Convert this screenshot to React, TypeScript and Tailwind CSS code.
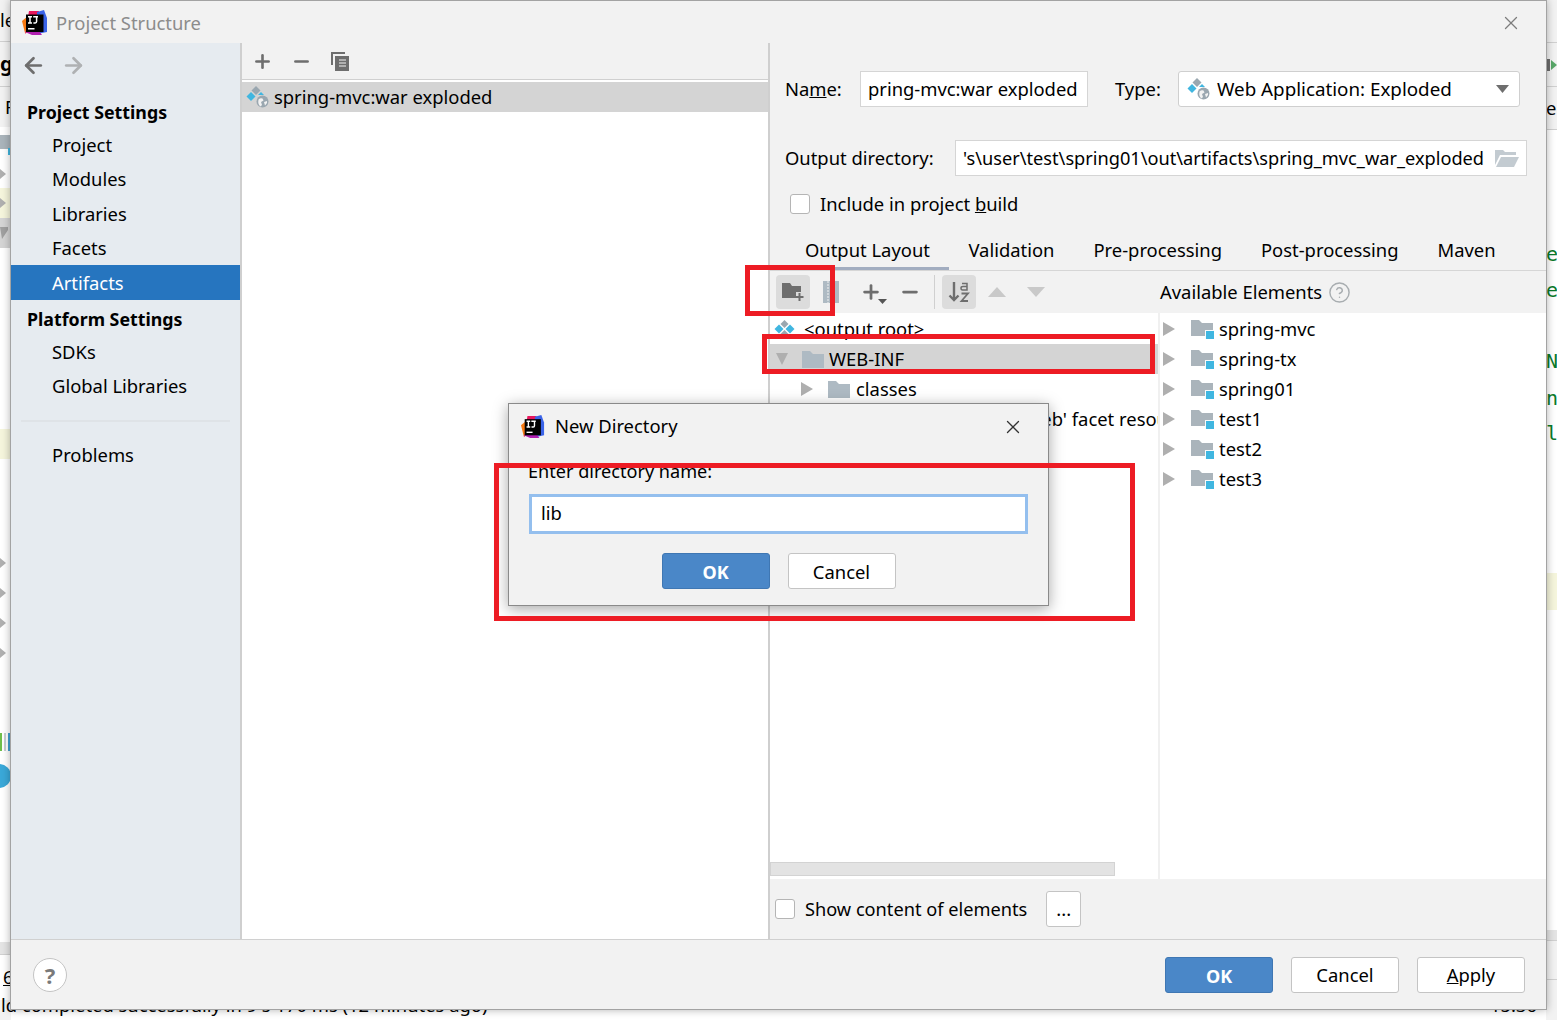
import { ReactNode } from "react";
import { ArrowLeft, ArrowRight, HelpCircle, Minus, Plus, X } from "lucide-react";

const ijLogo = (size: number) => (
  <svg width={size} height={size} viewBox="0 0 26 26">
    <path d="M7 1 L17 1 L14 14 L3 24 Z" fill="#e8175d" />
    <path d="M0 11 L6 6 L8 20 L3 23 Z" fill="#f97a12" />
    <path d="M15 2 L22 0 L25 8 L25 22 L15 24 Z" fill="#3a63e8" />
    <path d="M3 22 L10 25 L20 25 L12 14 Z" fill="#b01fb0" />
    <rect x="4" y="4.5" width="17.5" height="17.5" fill="#000" />
    <rect x="6" y="18" width="6.5" height="1.5" fill="#fff" />
    <path d="M6 6.8h4M8 6.8v6.2M6 13h4M11.2 6.8h4.8M14.6 6.8v4.8q0 1.4-1.4 1.4h-1.8" stroke="#fff" strokeWidth="1.5" fill="none" />
  </svg>
);

const ArtifactIcon = () => (
  <svg width="24" height="24" viewBox="0 0 24 24" className="shrink-0">
    <path d="M10 1 L14.5 5.5 L10 10 L5.5 5.5 Z" fill="#9aa7b0" />
    <path d="M5 7 L9.5 11.5 L5 16 L0.5 11.5 Z" fill="#40b6e0" />
    <path d="M15 7 L18 10 L12 10 Z" fill="#40b6e0" />
    <circle cx="16.5" cy="16.5" r="6" fill="#9aa7b0" />
    <path d="M12.5 14.5 q2-2 4-1 l1 2-2.5 1.5 1 3-1.5 1.5 q-3-2-2-7 Z M18 17l3-1 0 2-2 2.5Z" fill="#f2f2f2" />
  </svg>
);

const RootIcon = () => (
  <svg width="22" height="20" viewBox="0 0 22 20" className="shrink-0">
    <path d="M10.5 1 L14.5 5 L10.5 9 L6.5 5 Z" fill="#9aa7b0" />
    <path d="M5 5.5 L9.5 10 L5 14.5 L0.5 10 Z" fill="#40b6e0" />
    <path d="M16 5.5 L20.5 10 L16 14.5 L11.5 10 Z" fill="#40b6e0" />
    <path d="M10.5 11 L14.5 15 L10.5 19 L6.5 15 Z" fill="#9aa7b0" />
  </svg>
);

const FolderIcon = () => (
  <svg width="22" height="18" viewBox="0 0 22 18" className="shrink-0">
    <path d="M0 1 H8 L11 4 H22 V18 H0 Z" fill="#aebac3" />
  </svg>
);

const ModuleFolder = () => (
  <svg width="23" height="19" viewBox="0 0 23 19" className="shrink-0">
    <path d="M0 0 H8 L11 3 H22 V16 H0 Z" fill="#aab4bb" />
    <rect x="14" y="10" width="9" height="9" fill="#f8fafb" />
    <rect x="15" y="11" width="8" height="8" fill="#40b6e0" />
  </svg>
);

const Arrow = ({ open = false }: { open?: boolean }) => (
  <svg width="12" height="14" viewBox="0 0 12 14" className="shrink-0">
    {open ? <path d="M0 1 H12 L6 13 Z" fill="#afafaf" /> : <path d="M0 0 L12 7 L0 14 Z" fill="#afafaf" />}
  </svg>
);

const Checkbox = () => <div className="w-[20px] h-[20px] rounded-[3px] bg-white border border-[#b5b5b5] shrink-0" />;

const Btn = ({ children, primary = false }: { children: ReactNode; primary?: boolean }) => (
  <button
    type="button"
    className={`w-[108px] h-[36px] pt-[2px] rounded-[3px] border flex items-center justify-center ${
      primary ? "bg-[#4a87c8] border-[#3f77b3] text-white font-bold text-[18px]" : "bg-white border-[#c4c4c4] text-black"
    }`}
  >
    {children}
  </button>
);

const NavItem = ({ label, h = 34, active = false }: { label: string; h?: number; active?: boolean }) => (
  <div
    className={`pl-[41px] flex items-center ${active ? "bg-[#2675bf] text-white pt-[1px]" : "text-black"}`}
    style={{ height: h }}
  >
    {label}
  </div>
);

const NavHead = ({ label, h = 36 }: { label: string; h?: number }) => (
  <div className="pl-[16px] pt-[2px] flex items-center font-bold text-[17.8px]" style={{ height: h }}>
    {label}
  </div>
);

const modules = ["spring-mvc", "spring-tx", "spring01", "test1", "test2", "test3"];
const tabs = ["Output Layout", "Validation", "Pre-processing", "Post-processing", "Maven"];

const Green = ({ c }: { c: string }) => (
  <span className="text-[#0b7a2a] text-[20px] font-['DejaVu_Sans_Mono']">{c}</span>
);
const Sliver = ({ h, bg = "", children }: { h: number; bg?: string; children?: ReactNode }) => (
  <div className={`flex items-center overflow-hidden whitespace-nowrap ${bg}`} style={{ height: h }}>
    {children}
  </div>
);

export default function App() {
  return (
    <div
      className="relative w-[1557px] h-[1020px] overflow-hidden text-[18.4px] text-black leading-none bg-white"
      style={{ fontFamily: '"Noto Sans", "Liberation Sans", sans-serif' }}
    >
      {/* IDE behind the dialog */}
      <div className="flex justify-between">
        <div className="w-[11px] flex flex-col">
          <Sliver h={42} bg="bg-[#f2f2f2] border-b border-[#d0d0d0]">le</Sliver>
          <Sliver h={45} bg="bg-[#f2f2f2] border-b border-[#d0d0d0]"><b className="text-[20px]">g(</b></Sliver>
          <Sliver h={40} bg="bg-[#f2f2f2]"><span className="ml-[5px]">F</span></Sliver>
          <Sliver h={33}>
            <svg width="11" height="22" viewBox="0 0 11 22">
              <path d="M0 2 H11 V16 H0 Z" fill="#aab4bb" />
              <rect x="8" y="15" width="3" height="7" fill="#40b6e0" />
            </svg>
          </Sliver>
          <Sliver h={28}><svg width="6" height="10"><path d="M0 0 L6 5 L0 10 Z" fill="#afafaf" /></svg></Sliver>
          <Sliver h={30} bg="bg-[#f5f5dc]"><svg width="6" height="10"><path d="M0 0 L6 5 L0 10 Z" fill="#afafaf" /></svg></Sliver>
          <Sliver h={30} bg="bg-[#d4d4d4]"><svg width="8" height="12"><path d="M0 0 H8 V3 L2 12 Z" fill="#a0a0a0" /></svg></Sliver>
          <Sliver h={181} />
          <Sliver h={30} bg="bg-[#f5f5dc]" />
          <Sliver h={89} />
          {[0, 1, 2, 3].map((i) => (
            <Sliver key={i} h={30}><svg width="6" height="10"><path d="M0 0 L6 5 L0 10 Z" fill="#afafaf" /></svg></Sliver>
          ))}
          <Sliver h={64} />
          <Sliver h={20}>
            <div className="flex gap-[2px] h-[18px]">
              <div className="w-[2px] bg-[#6fbf4a]" />
              <div className="w-[2px] bg-[#c8ced2]" />
              <div className="w-[3px] bg-[#40a0d0]" />
            </div>
          </Sliver>
          <Sliver h={10} />
          <Sliver h={28}>
            <div className="w-[24px] h-[24px] -ml-[13px] rounded-full bg-[#3aa8d8] shrink-0" />
          </Sliver>
          <Sliver h={152} />
          <Sliver h={13} bg="bg-[#e4e4e4] border-b border-[#d0d0d0]" />
          <Sliver h={45}><span className="ml-[3px] underline">6</span></Sliver>
          <Sliver h={20} bg="bg-[#f2f2f2]" />
        </div>
        <div className="w-[11px] flex flex-col">
          <Sliver h={43} bg="bg-[#f2f2f2] border-b border-[#d0d0d0]" />
          <Sliver h={44} bg="bg-[#f2f2f2] border-b border-[#d0d0d0]">
            <svg width="11" height="14" viewBox="0 0 11 14">
              <path d="M0 1 H4 V13 H0 Z" fill="#6e6e6e" />
              <path d="M5 2 L11 7 L5 12 Z" fill="#59a869" />
            </svg>
          </Sliver>
          <Sliver h={43} bg="bg-[#f2f2f2] border-b border-[#d0d0d0]"><span>eb</span></Sliver>
          <Sliver h={106} />
          <Sliver h={36}><Green c="e" /></Sliver>
          <Sliver h={36}><Green c="e" /></Sliver>
          <Sliver h={35} />
          <Sliver h={36}><Green c="N" /></Sliver>
          <Sliver h={37}><Green c="n" /></Sliver>
          <Sliver h={34}><Green c="l" /></Sliver>
          <Sliver h={123} />
          <Sliver h={37} bg="bg-[#f5f5dc]" />
          <Sliver h={320} />
          <Sliver h={11} bg="bg-[#e4e4e4] border-b border-[#d0d0d0]" />
          <Sliver h={39} bg="bg-[#f2f2f2] border-b border-[#d0d0d0]" />
          <Sliver h={40} bg="bg-[#f2f2f2]" />
        </div>
      </div>
      <div className="absolute left-0 right-0 top-[993px] whitespace-nowrap flex justify-between pr-[20px]">
        <span className="pl-[1px] pt-[3px]">ld completed successfully in 9 s 170 ms (12 minutes ago)</span>
        <span className="pt-[3px]">15:36</span>
      </div>

      {/* Project Structure window */}
      <div className="absolute left-[10px] top-0 w-[1537px] h-[1010px] bg-[#f2f2f2] border border-[#a3a3a3] flex flex-col shadow-[0_0_8px_rgba(0,0,0,0.3)]">
        <div className="h-[42px] flex items-center shrink-0 pl-[11px] pr-[24px] pt-[2px]">
          {ijLogo(26)}
          <span className="ml-[8px] text-[#8c8c8c]">Project Structure</span>
          <X className="ml-auto text-[#7d7d7d]" size={22} strokeWidth={1.4} />
        </div>

        <div className="flex flex-1 min-h-0">
          <aside className="w-[229px] shrink-0 bg-[#e6ebf0] flex flex-col">
            <div className="h-[44px] flex items-center pl-[10px] gap-[15px] shrink-0">
              <ArrowLeft className="text-[#6e6e6e]" size={25} strokeWidth={2.6} />
              <ArrowRight className="text-[#afb1b3]" size={25} strokeWidth={2.6} />
            </div>
            <div className="pt-[7px]">
              <NavHead label="Project Settings" />
              <NavItem label="Project" h={31} />
              <NavItem label="Modules" h={36} />
              <NavItem label="Libraries" />
              <NavItem label="Facets" />
              <NavItem label="Artifacts" h={35} active />
              <NavHead label="Platform Settings" h={38} />
              <NavItem label="SDKs" h={29} />
              <NavItem label="Global Libraries" h={38} />
              <div className="h-[2px] mt-[15px] mb-[16px] mx-[10px] bg-[#dfe3e7]" />
              <NavItem label="Problems" />
            </div>
          </aside>

          <section className="w-[528px] shrink-0 flex flex-col bg-white border-l-2 border-[#cfcfcf]">
            <div className="h-[36px] bg-[#f2f2f2] flex items-center pl-[10px] gap-[18px] shrink-0">
              <Plus className="text-[#6e6e6e]" size={21} strokeWidth={3} />
              <Minus className="text-[#6e6e6e]" size={21} strokeWidth={3} />
              <svg width="20" height="20" viewBox="0 0 20 20">
                <path d="M1 1 H15 V3 H3 V14 H1 Z" fill="#6e6e6e" />
                <path d="M5 5 H19 V20 H5 Z" fill="#6e6e6e" />
                <path d="M9 9 H16 M9 12 H16 M9 15 H16" stroke="#f2f2f2" strokeWidth="1.2" />
              </svg>
            </div>
            <div className="h-[3px] bg-white border-t border-[#d0d0d0] shrink-0" />
            <div className="h-[30px] bg-[#d4d4d4] flex items-center pl-[4px] gap-[4px] shrink-0">
              <ArtifactIcon />
              <span>spring-mvc:war exploded</span>
            </div>
          </section>

          <section className="flex-1 min-w-0 flex flex-col border-l-2 border-[#cfcfcf]">
            <div className="h-[64px] flex items-center pl-[15px] shrink-0 pt-[28px]">
              <span className="w-[75px]">Na<span className="underline">m</span>e:</span>
              <div className="w-[228px] h-[36px] bg-white border border-[#d5d5d5] flex items-center pl-[7px] whitespace-nowrap overflow-hidden">
                pring-mvc:war exploded
              </div>
              <span className="ml-[27px] w-[63px]">Type:</span>
              <div className="w-[342px] h-[36px] bg-white border border-[#cfcfcf] rounded-[3px] flex items-center pl-[8px] pr-[10px] gap-[6px] text-[18.8px]">
                <ArtifactIcon />
                <span>Web Application: Exploded</span>
                <svg width="13" height="8" viewBox="0 0 13 8" className="ml-auto">
                  <path d="M0 0 H13 L6.5 8 Z" fill="#6e6e6e" />
                </svg>
              </div>
            </div>
            <div className="h-[36px] mt-[33px] flex items-center pl-[15px] shrink-0">
              <span className="w-[170px]">Output directory:</span>
              <div className="w-[572px] h-[36px] bg-white border border-[#d5d5d5] flex items-center pl-[7px] pr-[7px] whitespace-nowrap overflow-hidden text-[18.2px]">
                <span>'s\user\test\spring01\out\artifacts\spring_mvc_war_exploded</span>
                <svg width="24" height="19" viewBox="0 0 24 19" className="ml-auto shrink-0">
                  <path d="M0 1 H8 L10 3 H21 V6 H5 L0 16 Z" fill="#c3cbd1" />
                  <path d="M6 8 H24 L19 18 H1 Z" fill="#c3cbd1" />
                </svg>
              </div>
            </div>
            <div className="h-[20px] mt-[18px] flex items-center pl-[20px] gap-[10px] shrink-0">
              <Checkbox />
              <span>Include in project <span className="underline">b</span>uild</span>
            </div>

            <div className="h-[50px] mt-[7px] flex items-end border-b border-[#d6d6d6] shrink-0">
              {tabs.map((t, i) => (
                <div
                  key={t}
                  className={`h-[46px] pt-[10px] flex items-center whitespace-nowrap border-b-[3px] ${
                    i === 0 ? "pl-[35px] pr-[19px] border-[#a2adc0]" : "px-[19.5px] border-transparent"
                  }`}
                >
                  {t}
                </div>
              ))}
            </div>

            <div className="h-[42px] flex shrink-0">
              <div className="w-[388px] flex items-center pl-[6px] shrink-0">
                <div className="w-[34px] h-[34px] rounded-[4px] bg-[#dcdcdc] flex items-center justify-center">
                  <svg width="22" height="18" viewBox="0 0 22 18">
                    <path d="M0 0 H8 L10 3 H19 V9 H14 V15 H0 Z" fill="#6e6e6e" />
                    <path d="M17.5 10 V18 M13.5 14 H21.5" stroke="#6e6e6e" strokeWidth="2" />
                  </svg>
                </div>
                <svg width="16" height="22" viewBox="0 0 16 22" className="ml-[13px]">
                  <rect x="0" y="0" width="16" height="22" fill="#aebac3" />
                  <path d="M5 0 V22" stroke="#f2f2f2" strokeWidth="1" strokeDasharray="2 1" />
                </svg>
                <Plus className="ml-[21px] text-[#6e6e6e]" size={22} strokeWidth={3} />
                <svg width="9" height="5" viewBox="0 0 9 5" className="-ml-[4px] mt-[18px]">
                  <path d="M0 0 H9 L4.5 5 Z" fill="#555" />
                </svg>
                <Minus className="ml-[12px] text-[#6e6e6e]" size={22} strokeWidth={3} />
                <div className="w-px h-[34px] bg-[#d0d0d0] ml-[13px]" />
                <div className="w-[34px] h-[34px] ml-[7px] rounded-[4px] bg-[#dcdcdc] flex items-center justify-center">
                  <svg width="24" height="24" viewBox="0 0 24 24">
                    <path d="M7 2 V20 M2.5 15.5 L7 20 L11.5 15.5" stroke="#6e6e6e" strokeWidth="2.4" fill="none" />
                    <path d="M15 3.5 H20 V10 H15.5 Q14 10 14 8 Q14 6.5 16 6.5 H20" stroke="#6e6e6e" strokeWidth="1.5" fill="none" />
                    <path d="M14.5 13.5 H21 L14.5 21 H21" stroke="#6e6e6e" strokeWidth="1.8" fill="none" />
                  </svg>
                </div>
                <svg width="18" height="10" viewBox="0 0 18 10" className="ml-[12px]">
                  <path d="M9 0 L18 10 H0 Z" fill="#c9c9c9" />
                </svg>
                <svg width="18" height="10" viewBox="0 0 18 10" className="ml-[21px]">
                  <path d="M0 0 H18 L9 10 Z" fill="#c9c9c9" />
                </svg>
              </div>
              <div className="flex items-center pl-[2px] gap-[6px]">
                <span>Available Elements</span>
                <HelpCircle className="text-[#a8adb0]" size={23} strokeWidth={1.5} />
              </div>
            </div>

            <div className="flex-1 min-h-0 flex bg-white">
              <div className="w-[388px] shrink-0 flex flex-col overflow-hidden pt-[1px]">
                <div className="h-[30px] flex items-center pl-[4px] gap-[8px] shrink-0">
                  <RootIcon />
                  <span>&lt;output root&gt;</span>
                </div>
                <div className="h-[30px] bg-[#d4d4d4] flex items-center pl-[6px] shrink-0">
                  <Arrow open />
                  <span className="ml-[14px]"><FolderIcon /></span>
                  <span className="ml-[5px]">WEB-INF</span>
                </div>
                <div className="h-[30px] flex items-center pl-[31px] shrink-0">
                  <Arrow />
                  <span className="ml-[15px]"><FolderIcon /></span>
                  <span className="ml-[6px]">classes</span>
                </div>
                <div className="h-[30px] flex items-center pl-[65px] whitespace-nowrap shrink-0">
                  'spring-mvc' module: 'Web' facet resources
                </div>
                <div className="mt-auto h-[14px] w-[345px] mb-[3px] bg-[#e3e3e3] border border-[#d3d3d3]" />
              </div>
              <div className="flex-1 border-l-2 border-[#f0f0f0] pt-[1px] pl-[3px]">
                {modules.map((m) => (
                  <div key={m} className="h-[30px] flex items-center">
                    <Arrow />
                    <span className="ml-[16px]"><ModuleFolder /></span>
                    <span className="ml-[5px]">{m}</span>
                  </div>
                ))}
              </div>
            </div>

            <div className="h-[60px] flex items-center pl-[5px] shrink-0">
              <Checkbox />
              <span className="ml-[10px] text-[18.2px]">Show content of elements</span>
              <div className="ml-[19px] w-[35px] h-[36px] bg-white border border-[#c4c4c4] rounded-[3px] flex items-center justify-center">
                ...
              </div>
            </div>
          </section>
        </div>

        <footer className="h-[70px] shrink-0 border-t border-[#d0d0d0] flex items-center pl-[22px] pr-[21px]">
          <div className="w-[34px] h-[34px] rounded-full bg-white border border-[#c4c4c4] flex items-center justify-center text-[#7a7a7a] font-bold text-[22px]">
            ?
          </div>
          <div className="ml-auto flex gap-[18px]">
            <Btn primary>OK</Btn>
            <Btn>Cancel</Btn>
            <Btn>
              <span><span className="underline">A</span>pply</span>
            </Btn>
          </div>
        </footer>
      </div>

      {/* New Directory dialog */}
      <div className="absolute left-[508px] top-[403px] w-[541px] h-[203px] bg-[#f2f2f2] border border-[#8a8a8a] shadow-[0_3px_14px_rgba(0,0,0,0.35)] flex flex-col">
        <div className="h-[45px] flex items-center pl-[12px] pr-[24px] shrink-0">
          {ijLogo(24)}
          <span className="ml-[10px]">New Directory</span>
          <X className="ml-auto text-[#333]" size={22} strokeWidth={1.4} />
        </div>
        <div className="pl-[19px] pt-[13px] h-[30px] text-[18.1px]">Enter directory name:</div>
        <div className="mx-[20px] mt-[15px] h-[40px] bg-white border-[3px] border-[#94bfee] flex items-center pl-[9px] pb-[2px]">lib</div>
        <div className="flex justify-center gap-[18px] mt-[19px]">
          <Btn primary>OK</Btn>
          <Btn>Cancel</Btn>
        </div>
      </div>

      {/* red markup boxes drawn on the screenshot */}
      <div className="absolute left-[745px] top-[265px] w-[90px] h-[51px] border-[5px] border-[#ed1c24]" />
      <div className="absolute left-[762px] top-[334px] w-[393px] h-[40px] border-[5px] border-[#ed1c24]" />
      <div className="absolute left-[494px] top-[463px] w-[641px] h-[158px] border-[5px] border-[#ed1c24]" />
    </div>
  );
}
